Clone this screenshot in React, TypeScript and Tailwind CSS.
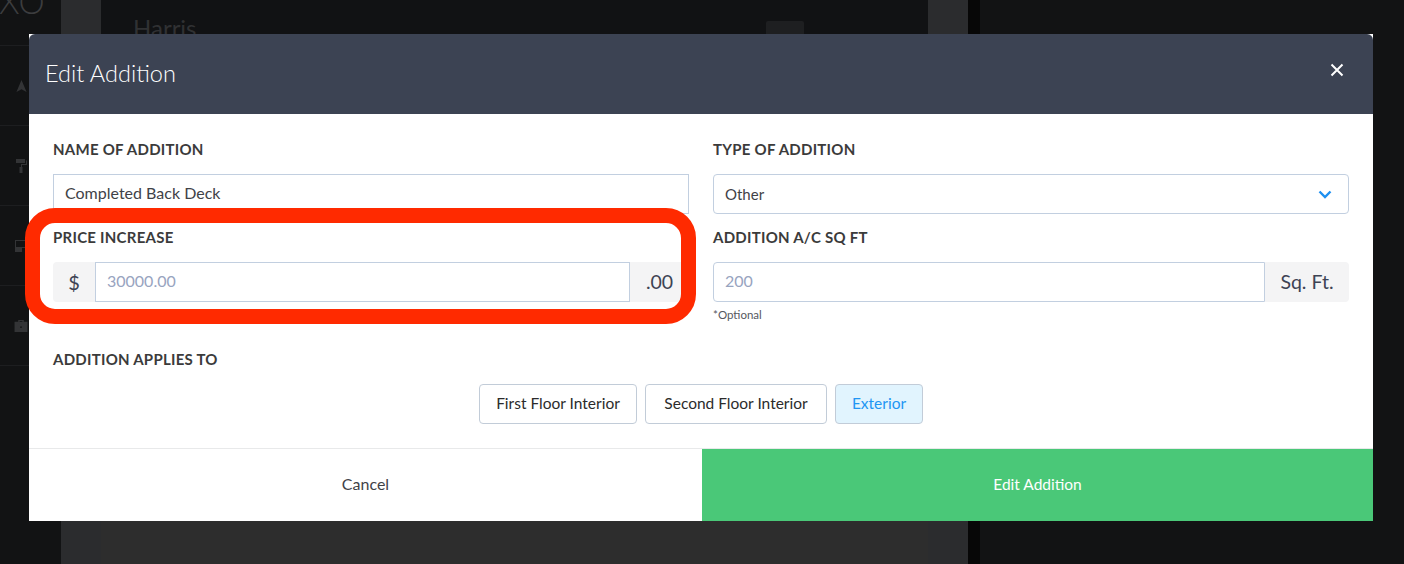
const fontStack = "font-['Lato','Open_Sans',sans-serif]";

function Label({ children }: { children: React.ReactNode }) {
  return <div className="text-[15px] leading-5 font-bold text-[#3b3b3b] tracking-[0.25px]">{children}</div>;
}

function ToggleButton({ label, width, active }: { label: string; width: string; active?: boolean }) {
  return (
    <button
      className={
        active
          ? `h-10 ${width} rounded border border-[#c2ccd8] bg-[#e1f4fe] text-[15.5px] text-[#2196f3]`
          : `h-10 ${width} rounded border border-[#c2ccd8] bg-white text-[15.5px] text-[#2b2b2b]`
      }
    >
      {label}
    </button>
  );
}

function Backdrop() {
  return (
    <div className="flex h-[564px] w-[1404px] bg-[#121314]">
      <div className="w-[61px] flex flex-col text-[#333436]">
        <div className="h-[46px] border-b border-[#1d1e20] overflow-hidden text-[#3c3d3f]">
          <div className="text-[33px] leading-[24px] -mt-[11px] -ml-[1px] font-light">XO</div>
        </div>
        <div className="h-[80px] border-b border-[#1d1e20] flex items-center pl-[16px]">
          <svg width="11" height="12" viewBox="0 0 11 13" fill="currentColor"><path d="M5.5 0 11 13 5.5 10 0 13z" /></svg>
        </div>
        <div className="h-[80px] border-b border-[#1d1e20] flex items-center pl-[16px]">
          <svg width="11" height="14" viewBox="0 0 11 14" fill="currentColor"><path d="M0 0h9v4H0zM10 1.5h1V6H6v2H5V5h5zM3.5 8h3v6h-3z" /></svg>
        </div>
        <div className="h-[80px] border-b border-[#1d1e20] flex items-center pl-[15px]">
          <svg width="11" height="12" viewBox="0 0 11 12" fill="currentColor"><path d="M0 0h11v8H7v4H0zM1 1v6h9V1z" fillRule="evenodd" /></svg>
        </div>
        <div className="h-[80px] border-b border-[#1d1e20] flex items-center pl-[14px]">
          <svg width="14" height="12" viewBox="0 0 14 13" fill="currentColor"><path d="M4 2V0h6v2h4v11H0V2zm1.5 0h3V1h-3zM6 7v1.5h2V7z" fillRule="evenodd" /></svg>
        </div>
      </div>
      <div className="w-[40px] bg-[#2b2c2e]" />
      <div className="w-[827px] flex flex-col">
        <div className="h-[115px] bg-[#111214] pl-[32px] pt-[14px] text-[#303133] text-[24px] leading-7 relative">
          Harris
          <div className="absolute left-[665px] top-[21px] w-[38px] h-[20px] rounded-t-[2px] bg-[#1e1f21]" />
        </div>
        <div className="flex-1 bg-[#111214]" />
        <div className="h-[43px] bg-[#2d2d2d]" />
      </div>
      <div className="w-[40px] bg-[#2b2c2e]" />
      <div className="w-[12px] bg-[#070707]" />
      <div className="flex-1" />
    </div>
  );
}

export default function App() {
  return (
    <div className={`relative w-[1404px] h-[564px] overflow-hidden ${fontStack}`}>
      <Backdrop />
      <div className="absolute left-[29px] top-[34px] w-[1344px] h-[487px] bg-white flex flex-col">
        <div className="h-[80px] bg-[#3c4353] rounded-t-[6px] flex items-center justify-between pl-4 pr-[29px] shrink-0">
          <span className="text-[23.5px] font-light text-white -mt-[1px]">Edit Addition</span>
          <svg width="14" height="14" viewBox="0 0 14 14" className="-mt-[8px]" stroke="white" strokeWidth="2"><path d="M1.5 1.5l11 11M12.5 1.5l-11 11" /></svg>
        </div>
        <div className="flex-1 px-6 pt-[25px]">
          <div className="grid grid-cols-[636px_636px] gap-x-6">
            <div>
              <Label>NAME OF ADDITION</Label>
              <div className="mt-[15px] h-10 border border-[#c2cfe0] flex items-center px-[11px] text-[16px] text-[#3f4247]">
                <span className="-mt-[2px]">Completed Back Deck</span>
              </div>
            </div>
            <div>
              <Label>TYPE OF ADDITION</Label>
              <div className="mt-[15px] h-10 border border-[#c2cfe0] rounded flex items-center justify-between pl-[11px] pr-4 text-[15px] text-[#3f4247]">
                Other
                <svg width="14" height="9" viewBox="0 0 14 9" fill="none" stroke="#1e90f0" strokeWidth="2.4"><path d="M1.5 1.5 7 7l5.5-5.5" /></svg>
              </div>
            </div>
            <div className="mt-[13px]">
              <Label>PRICE INCREASE</Label>
              <div className="mt-[15px] h-10 flex">
                <div className="w-[42px] bg-[#f4f4f5] rounded-l flex items-center justify-center text-[20px] text-[#3d4354]">$</div>
                <div className="flex-1 border border-[#c2cfe0] flex items-center px-[11px] text-[16px] text-[#98a4bf]">
                  <span className="-mt-[2px]">30000.00</span>
                </div>
                <div className="w-[59px] bg-[#f4f4f5] rounded-r flex items-center justify-center text-[19.5px] text-[#3d4354]">.00</div>
              </div>
            </div>
            <div className="mt-[13px]">
              <Label>ADDITION A/C SQ FT</Label>
              <div className="mt-[15px] h-10 flex">
                <div className="flex-1 border border-[#c2cfe0] rounded-l flex items-center px-[11px] text-[16px] text-[#98a4bf]">
                  <span className="-mt-[2px]">200</span>
                </div>
                <div className="w-[84px] bg-[#f4f4f5] rounded-r flex items-center justify-center text-[19.5px] text-[#3d4354]">Sq. Ft.</div>
              </div>
              <div className="mt-[7px] text-[11.5px] leading-3 text-[#55585e]">*Optional</div>
            </div>
          </div>
          <div className="mt-[28px]">
            <Label>ADDITION APPLIES TO</Label>
          </div>
          <div className="mt-[15px] flex justify-center gap-2">
            <ToggleButton label="First Floor Interior" width="w-[158px]" />
            <ToggleButton label="Second Floor Interior" width="w-[182px]" />
            <ToggleButton label="Exterior" width="w-[88px]" active />
          </div>
        </div>
        <div className="h-[73px] border-t border-[#e8e9ea] flex shrink-0">
          <button className="w-[673px] text-[16px] text-[#3f4247] pb-[2px]">Cancel</button>
          <button className="flex-1 bg-[#4ac878] text-[15.5px] text-white">Edit Addition</button>
        </div>
      </div>
      <div className="absolute left-[25px] top-[208px] w-[671px] h-[116px] rounded-[30px] border-[15px] border-[#ff2a00]" />
    </div>
  );
}
